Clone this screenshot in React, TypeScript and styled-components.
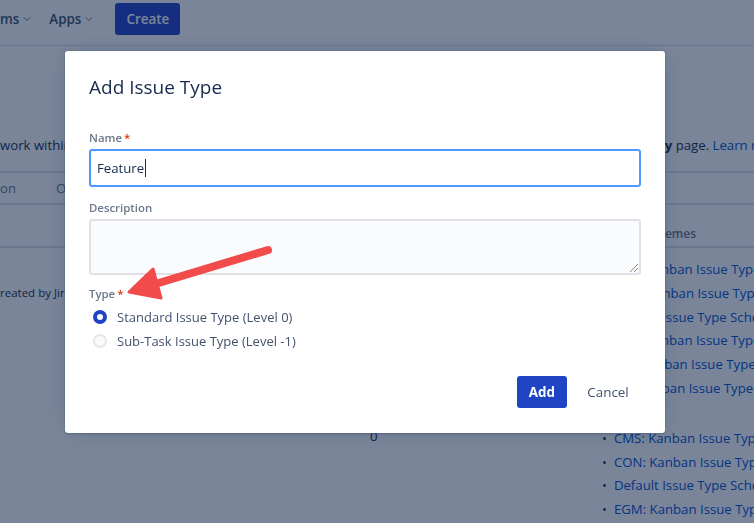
import styled, { createGlobalStyle } from "styled-components"
import { FiChevronDown } from "react-icons/fi"

const GlobalStyle = createGlobalStyle`
  html, body {
    margin: 0;
    padding: 0;
    background: #fff;
    font-family: "Open Sans", "Noto Sans", sans-serif;
    color: #42526e;
    overflow: hidden;
  }
`

const rowOneSchemes = [
  "AGL: Kanban Issue Type Scheme",
  "BRD: Kanban Issue Type Scheme",
  "Default Issue Type Scheme",
  "DEV: Kanban Issue Type Scheme",
  "MK: Kanban Issue Type Scheme",
  "OS: Kanban Issue Type Scheme",
]

const rowTwoSchemes = [
  "CMS: Kanban Issue Type Scheme",
  "CON: Kanban Issue Type Scheme",
  "Default Issue Type Scheme",
  "EGM: Kanban Issue Type Scheme",
]

const App = () => {
  return <>
    <GlobalStyle />
    <Page>
      <TopBar>
        <NavItem>ms <FiChevronDown /></NavItem>
        <NavItem>Apps <FiChevronDown /></NavItem>
        <CreateButton>Create</CreateButton>
      </TopBar>
      <Content>
        <Intro>
          <span>work within</span>
          <span><b>by</b> page. <a href="#learn">Learn more</a></span>
        </Intro>
        <FilterBar>
          <span>on</span>
          <span>O</span>
        </FilterBar>
        <TableHead>
          <span />
          <span />
          <span>Type Schemes</span>
        </TableHead>
        <TableRow>
          <NameCell>
            <small>reated by Jira</small>
          </NameCell>
          <span />
          <SchemeList>
            {rowOneSchemes.map((s, i) => <li key={i}><a href="#s">{s}</a></li>)}
          </SchemeList>
        </TableRow>
        <TableRow>
          <span />
          <CountCell>0</CountCell>
          <SchemeList>
            {rowTwoSchemes.map((s, i) => <li key={i}><a href="#s">{s}</a></li>)}
          </SchemeList>
        </TableRow>
      </Content>
    </Page>
    <Blanket />
    <Dialog>
      <Title>Add Issue Type</Title>
      <Field>
        <Label>Name<Req>*</Req></Label>
        <TextBox $focused>Feature<Caret /></TextBox>
      </Field>
      <Field>
        <Label>Description</Label>
        <TextArea />
      </Field>
      <Field>
        <Label>Type<Req>*</Req></Label>
        <RadioGroup>
          <RadioRow><Radio $checked />Standard Issue Type (Level 0)</RadioRow>
          <RadioRow><Radio />Sub-Task Issue Type (Level -1)</RadioRow>
        </RadioGroup>
      </Field>
      <Footer>
        <Button $primary>Add</Button>
        <Button>Cancel</Button>
      </Footer>
    </Dialog>
    <Arrow viewBox="0 0 754 523">
      <line x1="268" y1="250" x2="152" y2="285" stroke="#f24b4b" strokeWidth="8" strokeLinecap="round" />
      <polygon points="129,292 153,269 161,298" fill="#f24b4b" stroke="#f24b4b" strokeWidth="3" strokeLinejoin="round" />
    </Arrow>
  </>
}

const Page = styled.div`
  width: 754px;
  height: 523px;
  display: flex;
  flex-direction: column;

  & > * {
    flex-shrink: 0;
  }
`

const TopBar = styled.div`
  height: 46px;
  border-bottom: 1px solid #dfe1e6;
  box-sizing: border-box;
  display: flex;
  align-items: center;
  gap: 16px;
  padding-bottom: 8px;
`

const NavItem = styled.div`
  display: flex;
  align-items: center;
  gap: 2px;
  font-size: 13.4px;
  font-weight: 600;
  color: #42526e;

  svg {
    width: 12px;
    height: 12px;
    color: #6b778c;
  }
`

const CreateButton = styled.button`
  height: 32px;
  width: 65px;
  margin-left: 4px;
  border: none;
  border-radius: 3px;
  background: #2343c6;
  color: #fff;
  font-family: inherit;
  font-size: 13.4px;
  font-weight: 600;
`

const Content = styled.div`
  display: flex;
  flex-direction: column;
  font-size: 13px;

  & > * {
    flex-shrink: 0;
  }
`

const Intro = styled.div`
  display: flex;
  justify-content: space-between;
  margin-top: 89px;
  height: 20px;
  line-height: 20px;
  font-size: 13.2px;
  color: #172b4d;
  white-space: nowrap;

  span:last-child {
    margin-right: -30px;
  }

  a {
    color: #0052cc;
    text-decoration: none;
  }
`

const FilterBar = styled.div`
  margin-top: 16px;
  height: 30px;
  border-top: 2px solid #dfe1e6;
  border-bottom: 2px solid #dfe1e6;
  display: flex;
  align-items: center;
  gap: 40px;
  font-size: 13.2px;
  color: #6b778c;
`

const TableHead = styled.div`
  height: 42px;
  border-bottom: 2px solid #dfe1e6;
  display: grid;
  grid-template-columns: 370px 244px 1fr;
  align-items: end;
  padding-bottom: 4px;
  box-sizing: border-box;
  font-size: 12px;
  font-weight: 600;
  color: #6b778c;
  white-space: nowrap;
  margin-top: 1px;
`

const TableRow = styled.div`
  display: grid;
  grid-template-columns: 370px 244px 1fr;
  padding: 10px 0 16px;
`

const NameCell = styled.div`
  padding-top: 25px;

  small {
    font-size: 11.5px;
    color: #172b4d;
  }
`

const CountCell = styled.div`
  font-size: 13.2px;
  color: #172b4d;
`

const SchemeList = styled.ul`
  margin: 0;
  padding: 0;
  list-style: none;
  white-space: nowrap;

  li {
    height: 23.8px;
    line-height: 22px;
  }

  li::before {
    content: "•";
    margin-left: -12px;
    margin-right: 7px;
    color: #172b4d;
  }

  a {
    color: #0052cc;
    text-decoration: none;
    font-size: 13.2px;
  }
`

const Blanket = styled.div`
  position: fixed;
  inset: 0;
  background: rgba(9, 30, 66, 0.54);
`

const Dialog = styled.div`
  position: fixed;
  left: 65px;
  top: 51px;
  width: 600px;
  height: 382px;
  box-sizing: border-box;
  background: #fff;
  border-radius: 3px;
  padding: 24px 24px 25px;
  display: flex;
  flex-direction: column;
  box-shadow: 0 0 0 1px rgba(9, 30, 66, 0.08), 0 2px 1px rgba(9, 30, 66, 0.08), 0 0 20px -6px rgba(9, 30, 66, 0.31);
`

const Title = styled.h1`
  margin: 0 0 30px;
  font-size: 19px;
  line-height: 24px;
  font-weight: 500;
  color: #172b4d;
`

const Field = styled.div`
  display: flex;
  flex-direction: column;
  gap: 4px;
  margin-bottom: 12px;

  &:nth-of-type(3) {
    margin-top: -2px;
  }
`

const Label = styled.label`
  font-size: 11.4px;
  line-height: 16px;
  font-weight: 600;
  color: #6b778c;
  margin-top: 1px;
  margin-bottom: -1px;
`

const Req = styled.span`
  color: #de350b;
  margin-left: 2px;
`

const TextBox = styled.div<{ $focused?: boolean }>`
  height: 38px;
  box-sizing: border-box;
  border: 2px solid ${p => p.$focused ? "#4c9aff" : "#dfe1e6"};
  border-radius: 3px;
  background: ${p => p.$focused ? "#fff" : "#fafbfc"};
  display: flex;
  align-items: center;
  padding: 0 6px;
  font-size: 13.2px;
  color: #172b4d;
`

const Caret = styled.span`
  display: inline-block;
  width: 1px;
  height: 18px;
  background: #172b4d;
  margin-left: 1px;
`

const TextArea = styled.div`
  height: 56px;
  box-sizing: border-box;
  border: 2px solid #dfe1e6;
  border-radius: 3px;
  background: #fafbfc;
  position: relative;

  &::after {
    content: "";
    position: absolute;
    right: 1px;
    bottom: 1px;
    width: 8px;
    height: 8px;
    background: linear-gradient(135deg, transparent 45%, #888 45%, #888 52%, transparent 52%, transparent 70%, #888 70%, #888 77%, transparent 77%);
  }
`

const RadioGroup = styled.div`
  display: flex;
  flex-direction: column;
  margin-left: 4px;
`

const RadioRow = styled.div`
  height: 24px;
  display: flex;
  align-items: center;
  gap: 10px;
  font-size: 13px;
  color: #42526e;
`

const Radio = styled.span<{ $checked?: boolean }>`
  width: 14px;
  height: 14px;
  border-radius: 50%;
  box-sizing: border-box;
  background: ${p => p.$checked ? "#fff" : "#fafbfc"};
  border: ${p => p.$checked ? "4.5px solid #1f45c5" : "2px solid #e4e6ea"};
`

const Footer = styled.div`
  margin-top: auto;
  display: flex;
  justify-content: flex-end;
  gap: 8px;
`

const Button = styled.button<{ $primary?: boolean }>`
  height: 32px;
  padding: 0 12px;
  border: none;
  border-radius: 3px;
  font-family: inherit;
  font-size: 13.4px;
  font-weight: ${p => p.$primary ? 700 : 500};
  background: ${p => p.$primary ? "#1f45c5" : "transparent"};
  color: ${p => p.$primary ? "#fff" : "#42526e"};
  min-width: ${p => p.$primary ? "50px" : "66px"};
`

const Arrow = styled.svg`
  position: fixed;
  left: 0;
  top: 0;
  width: 754px;
  height: 523px;
  pointer-events: none;
`

export default App
